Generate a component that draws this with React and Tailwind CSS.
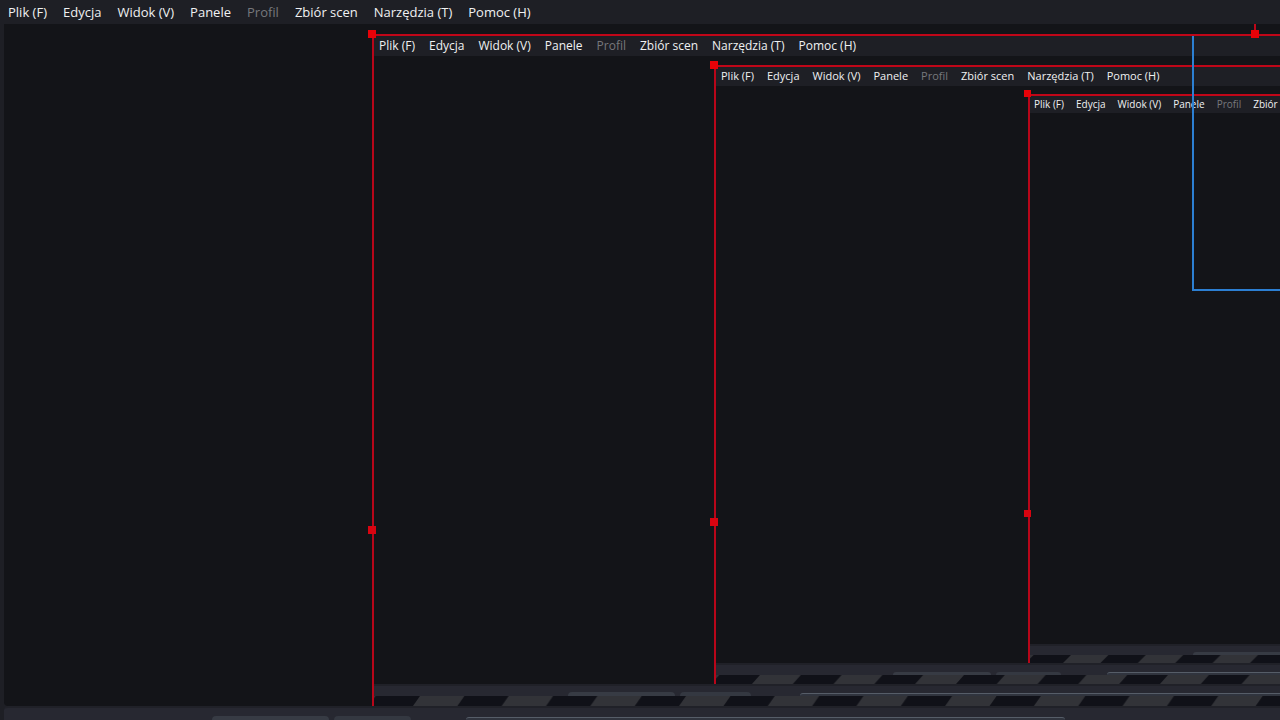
const MENU = [
  'Plik (F)',
  'Edycja',
  'Widok (V)',
  'Panele',
  'Profil',
  'Zbiór scen',
  'Narzędzia (T)',
  'Pomoc (H)',
];

function MenuBar({ className }) {
  return (
    <nav className={`flex shrink-0 items-center overflow-hidden whitespace-nowrap bg-[#1e1f25] ${className}`}>
      {MENU.map((label) => (
        <button
          key={label}
          type="button"
          disabled={label === 'Profil'}
          className="shrink-0 text-[#f0f1f2] disabled:text-[#77787c]"
        >
          {label}
        </button>
      ))}
    </nav>
  );
}

function Stripes({ id, period, offset, height, slant }) {
  const half = period / 2;
  return (
    <svg className="block w-full shrink-0" height={height} aria-hidden="true">
      <defs>
        <pattern id={id} x={offset} y="0" width={period} height={height} patternUnits="userSpaceOnUse">
          <rect width={period} height={height} fill="#101118" />
          <polygon points={`${slant},0 ${half + slant},0 ${half},${height} 0,${height}`} fill="#323338" />
        </pattern>
      </defs>
      <rect width="100%" height={height} fill={`url(#${id})`} />
    </svg>
  );
}

function Dock({ className, first, second, panel }) {
  return (
    <div className={`flex shrink-0 items-end overflow-hidden border-t-2 border-[#202128] bg-[#272831] ${className}`}>
      <div className={`shrink-0 rounded-t-sm bg-[#373b44] ${first}`} />
      <div className={`shrink-0 rounded-t-sm bg-[#343841] ${second}`} />
      <div className={`shrink-0 rounded-t-sm border-t border-[#565d68] bg-[#30343e] ${panel}`} />
    </div>
  );
}

function Frame({ className, handle, menu, stripes, dock, children }) {
  return (
    <section className={`relative flex min-w-0 flex-1 flex-col ${className}`}>
      <div className="h-[2px] shrink-0 bg-[#c00618]" />
      <div className="flex min-h-0 flex-1">
        <div className="w-[2px] shrink-0 bg-[#b80619]" />
        <div className="flex min-w-0 flex-1 flex-col">
          <MenuBar className={menu} />
          <div className="flex min-h-0 flex-1 bg-[#131418]">{children}</div>
          <Dock {...dock} />
          <Stripes {...stripes} />
        </div>
      </div>
      <span className={`absolute -top-1 -left-1 bg-[#e80208] ${handle}`} />
      <span className={`absolute top-[calc(74%-5px)] -left-1 bg-[#d90410] ${handle}`} />
    </section>
  );
}

export default function App() {
  return (
    <div className="flex h-screen flex-col overflow-hidden bg-[#1e1f25] font-['Open_Sans','Noto_Sans',sans-serif]">
      <MenuBar className="h-6 gap-4 px-2 pt-0.5 text-[13px]" />
      <main className="relative ml-1 flex min-h-0 flex-1 overflow-hidden rounded-bl-sm bg-[#131418]">
        <Frame
          className="mt-[10px] ml-[368px]"
          handle="size-2"
          menu="h-5 gap-[14px] px-[5px] text-[12px] font-medium"
          stripes={{ id: 'stripes-large', period: 88.7, offset: 39, height: 10, slant: 7 }}
          dock={{
            className: 'h-3',
            first: 'ml-[194px] h-1 w-[107px]',
            second: 'ml-[5px] h-1 w-[71px]',
            panel: 'ml-[49px] h-[3px] w-[550px]',
          }}
        >
          <Frame
            className="mt-[9px] ml-[340px]"
            handle="size-2"
            menu="h-[19px] gap-[13px] px-[5px] text-[11px] font-medium"
            stripes={{ id: 'stripes-medium', period: 81.6, offset: 36, height: 9, slant: 8 }}
            dock={{
              className: 'h-3',
              first: 'ml-[177px] h-[3px] w-[98px]',
              second: 'ml-[5px] h-[3px] w-[65px]',
              panel: 'ml-[46px] h-[3px] w-[506px]',
            }}
          >
            <Frame
              className="mt-2 ml-[312px]"
              handle="size-[7px]"
              menu="h-[17px] gap-3 px-1 text-[10px] font-medium"
              stripes={{ id: 'stripes-small', period: 74.8, offset: 33, height: 8, slant: 8 }}
              dock={{
                className: 'h-[11px]',
                first: 'ml-[163px] h-[3px] w-[90px]',
                second: 'ml-1 h-[3px] w-[60px]',
                panel: 'ml-[42px] h-[3px] w-[465px]',
              }}
            />
          </Frame>
        </Frame>
        <div className="absolute top-3 right-0 left-[1188px] h-[255px] border-b-2 border-l-2 border-[#2c7fd2]" />
        <div className="absolute top-0 left-[1250px] h-[10px] w-[2px] bg-[#c00618]" />
        <div className="absolute top-[6px] left-[1247px] size-2 bg-[#e80208]" />
      </main>
      <footer className="flex shrink-0 flex-col pl-1">
        <Dock
          className="h-[14px] rounded-tl-sm"
          first="ml-[208px] h-1 w-[117px]"
          second="ml-[5px] h-1 w-[77px]"
          panel="ml-[55px] h-[3px] w-[599px]"
        />
      </footer>
    </div>
  );
}
